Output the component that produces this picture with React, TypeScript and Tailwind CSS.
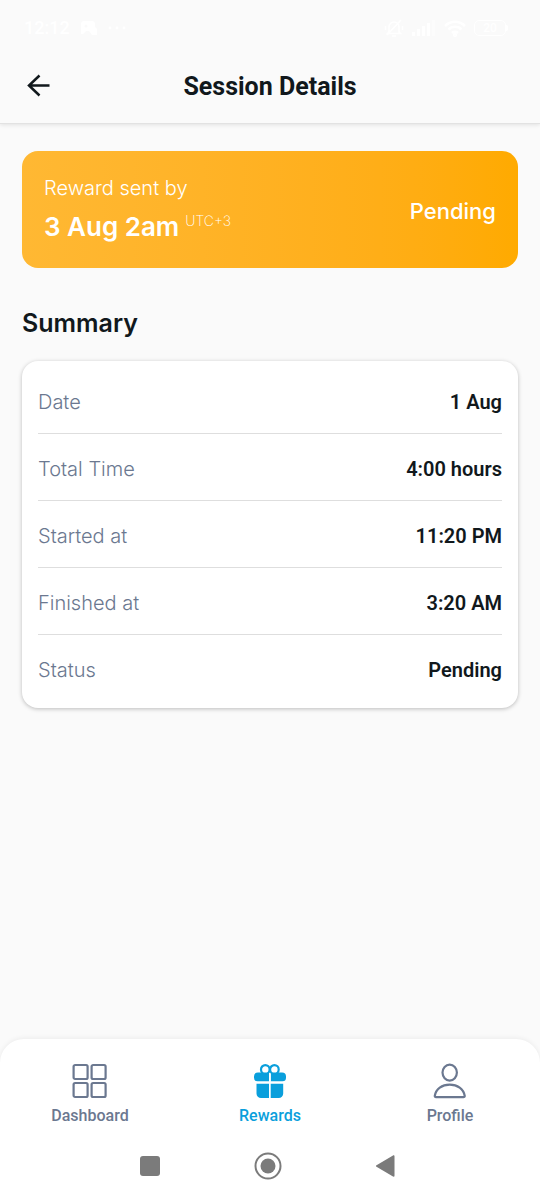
import type { ReactNode } from "react";

const rows = [
  { label: "Date", value: "1 Aug" },
  { label: "Total Time", value: "4:00 hours" },
  { label: "Started at", value: "11:20 PM" },
  { label: "Finished at", value: "3:20 AM" },
  { label: "Status", value: "Pending" },
];

function StatusBar() {
  return (
    <div className="flex h-14 items-center justify-between pl-6 pr-8 text-white">
      <div className="flex items-center gap-2.5">
        <span className="text-lg leading-6 font-medium">12:12</span>
        <svg width="18" height="16" viewBox="0 0 18 16" fill="currentColor" aria-hidden="true">
          <path d="M1 4a3 3 0 0 1 3-3h8a3 3 0 0 1 3 3v3l2 2v6h-5l-3-4H6l-3 3H1z" />
          <circle cx="6" cy="6" r="1.5" fill="#fafafa" />
        </svg>
        <svg width="18" height="4" viewBox="0 0 18 4" fill="currentColor" aria-hidden="true">
          <circle cx="2" cy="2" r="1.4" />
          <circle cx="9" cy="2" r="1.4" />
          <circle cx="16" cy="2" r="1.4" />
        </svg>
      </div>
      <div className="flex items-center gap-2">
        <svg width="20" height="20" viewBox="0 0 20 20" fill="none" stroke="currentColor" strokeWidth="1.6" aria-hidden="true">
          <path d="M5 14V9a5 5 0 0 1 10 0v5l1.5 1.5h-13zM8 18h4M3 17 17 2M1.5 8v4M18.5 8v4" />
        </svg>
        <svg width="24" height="16" viewBox="0 0 24 16" fill="currentColor" aria-hidden="true">
          <path d="M0 12h3v4H0zM5 9h3v7H5zM10 6h3v10h-3zM15 3h3v13h-3z" />
          <path d="M20 0h3v16h-3z" opacity=".4" />
        </svg>
        <svg width="22" height="17" viewBox="0 0 22 17" fill="none" stroke="currentColor" strokeWidth="2.6" aria-hidden="true">
          <path d="M1 6a14 14 0 0 1 20 0M4.5 9.5a9 9 0 0 1 13 0M8 13a4.5 4.5 0 0 1 6 0" />
          <circle cx="11" cy="15" r="0.8" />
        </svg>
        <span className="flex items-center">
          <span className="flex h-4 w-8 items-center justify-center rounded-[5px] border border-white text-xs leading-3 font-medium">
            20
          </span>
          <span className="h-1.5 w-0.5 rounded-r bg-white" />
        </span>
      </div>
    </div>
  );
}

function RewardCard() {
  return (
    <section className="flex h-[117px] items-center justify-between rounded-2xl bg-linear-to-r from-[#ffb833] to-[#ffaa00] px-[22px] font-['Inter',sans-serif] text-white">
      <div>
        <p className="text-xl leading-7 font-light">Reward sent by</p>
        <p className="mt-[7px] flex items-start gap-1.5">
          <span className="text-[26px] leading-9 font-semibold">3 Aug 2am</span>
          <span className="pt-0.5 text-sm leading-5 font-extralight">UTC+3</span>
        </p>
      </div>
      <p className="pt-0.5 text-[22px] leading-7 font-medium">Pending</p>
    </section>
  );
}

function DashboardIcon() {
  return (
    <svg width="36" height="36" viewBox="0 0 36 36" fill="none" stroke="currentColor" strokeWidth="2.2" aria-hidden="true">
      <rect x="1.6" y="2" width="14" height="14" rx="1.5" />
      <rect x="19.6" y="2" width="14" height="14" rx="1.5" />
      <rect x="1.6" y="20" width="14" height="14" rx="1.5" />
      <rect x="19.6" y="20" width="14" height="14" rx="1.5" />
    </svg>
  );
}

function GiftIcon() {
  return (
    <svg width="36" height="36" viewBox="0 0 36 36" fill="currentColor" aria-hidden="true">
      <path d="M6 9.6h11v8.600H5.500A3.500 3.500 0 0 1 2 14.700V13.600a4 4 0 0 1 4-4zM18.700 9.600H30a4 4 0 0 1 4 4v1.100a3.500 3.500 0 0 1-3.500 3.500H18.700z" />
      <path d="M4.500 20.800H17V35H9a4.500 4.500 0 0 1-4.500-4.500zM18.700 20.800h12.500v9.700a4.500 4.500 0 0 1-4.500 4.500h-8z" />
      <g fill="#fff" stroke="currentColor" strokeWidth="2.2">
        <circle cx="13.3" cy="6.4" r="4.3" />
        <circle cx="22.4" cy="6.4" r="4.3" />
      </g>
      <path d="M17 10.500h1.700v8H17z" fill="#fff" />
    </svg>
  );
}

function ProfileIcon() {
  return (
    <svg width="36" height="36" viewBox="0 0 36 36" fill="none" stroke="currentColor" strokeWidth="2.2" aria-hidden="true">
      <ellipse cx="17.7" cy="9.6" rx="7.2" ry="8" />
      <path
        d="M4 34.200h27.500c.8 0 1.300-.6 1.200-1.400C31.500 26 25.500 21.700 17.700 21.700S4 26 2.800 32.800c-.1.800.4 1.400 1.200 1.400z"
        strokeLinejoin="round"
      />
    </svg>
  );
}

function Tab({ label, icon, active }: { label: string; icon: ReactNode; active?: boolean }) {
  return (
    <a
      href="#"
      aria-current={active ? "page" : undefined}
      className={
        active
          ? "flex flex-col items-center gap-[5px] text-[#0a9fdc]"
          : "flex flex-col items-center gap-[5px] text-[#6b7890]"
      }
    >
      {icon}
      <span className="text-base leading-6 font-medium">{label}</span>
    </a>
  );
}

function SystemBar() {
  return (
    <div className="flex items-center justify-center gap-[90px] pr-1 pb-5 text-[#7b7b7b]">
      <button type="button" aria-label="Recent apps">
        <svg width="28" height="28" viewBox="0 0 28 28" fill="currentColor">
          <rect x="4" y="4" width="20" height="20" rx="3" />
        </svg>
      </button>
      <button type="button" aria-label="Home">
        <svg width="28" height="28" viewBox="0 0 28 28" fill="currentColor">
          <circle cx="14" cy="14" r="12.5" fill="none" stroke="currentColor" strokeWidth="2" />
          <circle cx="14" cy="14" r="7.5" />
        </svg>
      </button>
      <button type="button" aria-label="Back">
        <svg width="28" height="28" viewBox="0 0 28 28" fill="currentColor">
          <path d="M4.5 13.200 21 3.400c.7-.4 1.500 0 1.500.8v19.600c0 .8-.8 1.200-1.500.8L4.500 14.800c-.7-.4-.7-1.200 0-1.600z" />
        </svg>
      </button>
    </div>
  );
}

export default function App() {
  return (
    <div className="flex min-h-screen flex-col bg-[#fafafa] font-['Roboto',sans-serif] text-[#11181c]">
      <header className="border-b border-[#e2e2e2] shadow-[0_1px_4px_rgba(0,0,0,0.1)]">
        <StatusBar />
        <div className="grid h-[67px] grid-cols-[1fr_auto_1fr] items-center px-6 pb-1.5">
          <button type="button" aria-label="Go back" className="w-7">
            <svg width="28" height="28" viewBox="0 0 28 28" fill="none" stroke="currentColor" strokeWidth="2.5">
              <path d="M25.500 12.500H5M15.500 2.500 5 12.500l10.500 10" />
            </svg>
          </button>
          <h1 className="text-[25px] leading-8 font-bold">Session Details</h1>
        </div>
      </header>

      <main className="flex-1 px-[22px] pt-[27px]">
        <RewardCard />
        <h2 className="mt-[37px] font-['Inter',sans-serif] text-[25px] leading-9 font-semibold">Summary</h2>
        <dl className="mt-5 rounded-2xl bg-white px-4 py-1.5 shadow-[0_1px_4px_rgba(0,0,0,0.25)]">
          {rows.map((row) => (
            <div
              key={row.label}
              className="flex h-[67px] items-center justify-between border-b border-[#dedede] pt-[3px] last:border-0"
            >
              <dt className="font-['Inter',sans-serif] text-xl leading-7 font-light text-[#6b7890]">{row.label}</dt>
              <dd className="text-xl leading-7 font-semibold">{row.value}</dd>
            </div>
          ))}
        </dl>
      </main>

      <footer className="rounded-t-3xl bg-white shadow-[0_-1px_5px_rgba(0,0,0,0.06)]">
        <nav className="grid grid-cols-3 pt-6 pb-6">
          <Tab label="Dashboard" icon={<DashboardIcon />} />
          <Tab label="Rewards" icon={<GiftIcon />} active />
          <Tab label="Profile" icon={<ProfileIcon />} />
        </nav>
        <SystemBar />
      </footer>
    </div>
  );
}
